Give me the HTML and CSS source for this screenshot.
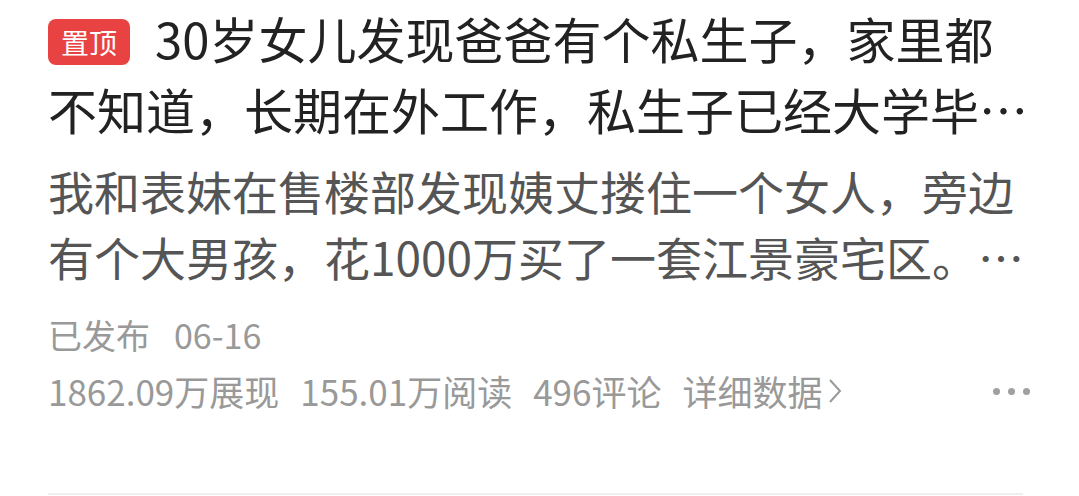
FILE: index.html
```html
<!DOCTYPE html>
<html lang="zh-CN">
<head>
<meta charset="utf-8">
<link rel="stylesheet" href="styles.css">
</head>
<body>
<div class="card">
  <h1 class="title"><span class="badge">置顶</span>30岁女儿发现爸爸有个私生子，家里都不知道，长期在外工作，私生子已经大学毕…</h1>
  <p class="summary">我和表妹在售楼部发现姨丈搂住一个女人，旁边有个大男孩，花1000万买了一套江景豪宅区。…</p>
  <div class="meta"><span>已发布</span><span>06-16</span></div>
  <div class="stats">
    <span>1862.09万展现</span>
    <span>155.01万阅读</span>
    <span>496评论</span>
    <span class="detail">详细数据<svg class="chev" width="14" height="26" viewBox="0 0 14 26"><path d="M2 2 L12 13 L2 24" fill="none" stroke="#999" stroke-width="2"/></svg></span>
    <span class="more"><i></i><i></i><i></i></span>
  </div>
  <div class="divider"></div>
</div>
</body>
</html>
```
FILE: styles.css
```css
html, body {
  margin: 0;
  padding: 0;
  background: #fff;
}
body {
  font-family: "Noto Sans CJK SC", "Noto Sans", sans-serif;
}
.card {
  box-sizing: border-box;
  height: 496px;
  padding: 2px 47px 0 48px;
  display: flex;
  flex-direction: column;
}
.title {
  margin: 0;
  font-size: 49px;
  line-height: 71px;
  font-weight: 400;
  color: #222;
}
.badge {
  display: inline-block;
  width: 82px;
  height: 46px;
  line-height: 46px;
  margin-right: 25px;
  background: #e84242;
  color: #fff;
  border-radius: 8px;
  font-size: 28px;
  text-align: center;
  vertical-align: 5px;
}
.summary {
  margin: 13px 0 0;
  font-size: 46px;
  line-height: 66px;
  color: #555;
}
.meta {
  margin-top: 22px;
  font-size: 34px;
  line-height: 48px;
  color: #999;
  display: flex;
  gap: 24px;
}
.stats {
  margin-top: 8px;
  font-size: 35px;
  line-height: 48px;
  color: #999;
  display: flex;
  align-items: center;
  gap: 21px;
}
.detail {
  display: flex;
  align-items: center;
  gap: 6px;
}
.more {
  margin-left: auto;
  margin-right: 2px;
  display: flex;
  gap: 8px;
}
.more i {
  width: 7px;
  height: 7px;
  border-radius: 50%;
  background: #a0a0a0;
}
.divider {
  margin-top: auto;
  margin-right: 9px;
  margin-bottom: 1px;
  height: 2px;
  background: #efefef;
}
```
